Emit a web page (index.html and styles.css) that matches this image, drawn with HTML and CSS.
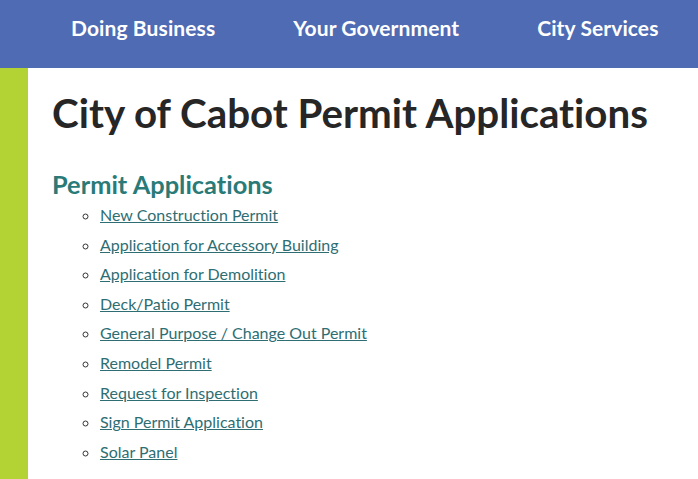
FILE: index.html
```html
<!DOCTYPE html>
<html lang="en">
<head>
    <meta charset="UTF-8">
    <meta name="viewport" content="width=device-width, initial-scale=1.0">
    <title>City of Cabot Permit Applications</title>
    <link rel="stylesheet" href="styles.css">
</head>
<body>
    <!-- top navigation -->
    <nav class="top-nav">
        <a href="#">Doing Business</a>
        <a href="#">Your Government</a>
        <a href="#">City Services</a>
    </nav>

    <div class="page">
        <div class="side-accent"></div>
        <main class="content">
            <h1>City of Cabot Permit Applications</h1>
            <h2>Permit Applications</h2>
            <ul class="permit-list">
                <li><a href="#">New Construction Permit</a></li>
                <li><a href="#">Application for Accessory Building</a></li>
                <li><a href="#">Application for Demolition</a></li>
                <li><a href="#">Deck/Patio Permit</a></li>
                <li><a href="#">General Purpose / Change Out Permit</a></li>
                <li><a href="#">Remodel Permit</a></li>
                <li><a href="#">Request for Inspection</a></li>
                <li><a href="#">Sign Permit Application</a></li>
                <li><a href="#">Solar Panel</a></li>
            </ul>
        </main>
    </div>
</body>
</html>
```

FILE: styles.css
```css
* {
    margin: 0;
    padding: 0;
    box-sizing: border-box;
}

body {
    font-family: Lato, 'Liberation Sans', sans-serif;
    font-variant-ligatures: none;
    background: #fff;
    color: #262626;
}

/* top navigation */
.top-nav {
    height: 68px;
    background: #4f6bb3;
    display: flex;
    align-items: flex-start;
    gap: 78px;
    padding: 14px 0 0 71px;
}

.top-nav a {
    color: #fff;
    text-decoration: none;
    font-weight: bold;
    font-size: 21px;
    line-height: 28px;
    letter-spacing: 0.1px;
}

/* page body */
.page {
    display: flex;
    min-height: 411px;
}

.side-accent {
    width: 28px;
    background: #b3d335;
    flex-shrink: 0;
}

.content {
    padding: 21px 24px 0 24px;
}

h1 {
    font-size: 40.3px;
    font-weight: bold;
    line-height: 48px;
    color: #262626;
}

h2 {
    font-size: 25.4px;
    font-weight: bold;
    color: #2a7a78;
    margin-top: 32px;
    line-height: 30px;
}

.permit-list {
    list-style: circle;
    padding-left: 48px;
    margin-top: 1px;
}

.permit-list li {
    font-size: 16px;
    line-height: 29.6px;
    color: #333;
}

.permit-list a {
    color: #2e6e73;
}
```
